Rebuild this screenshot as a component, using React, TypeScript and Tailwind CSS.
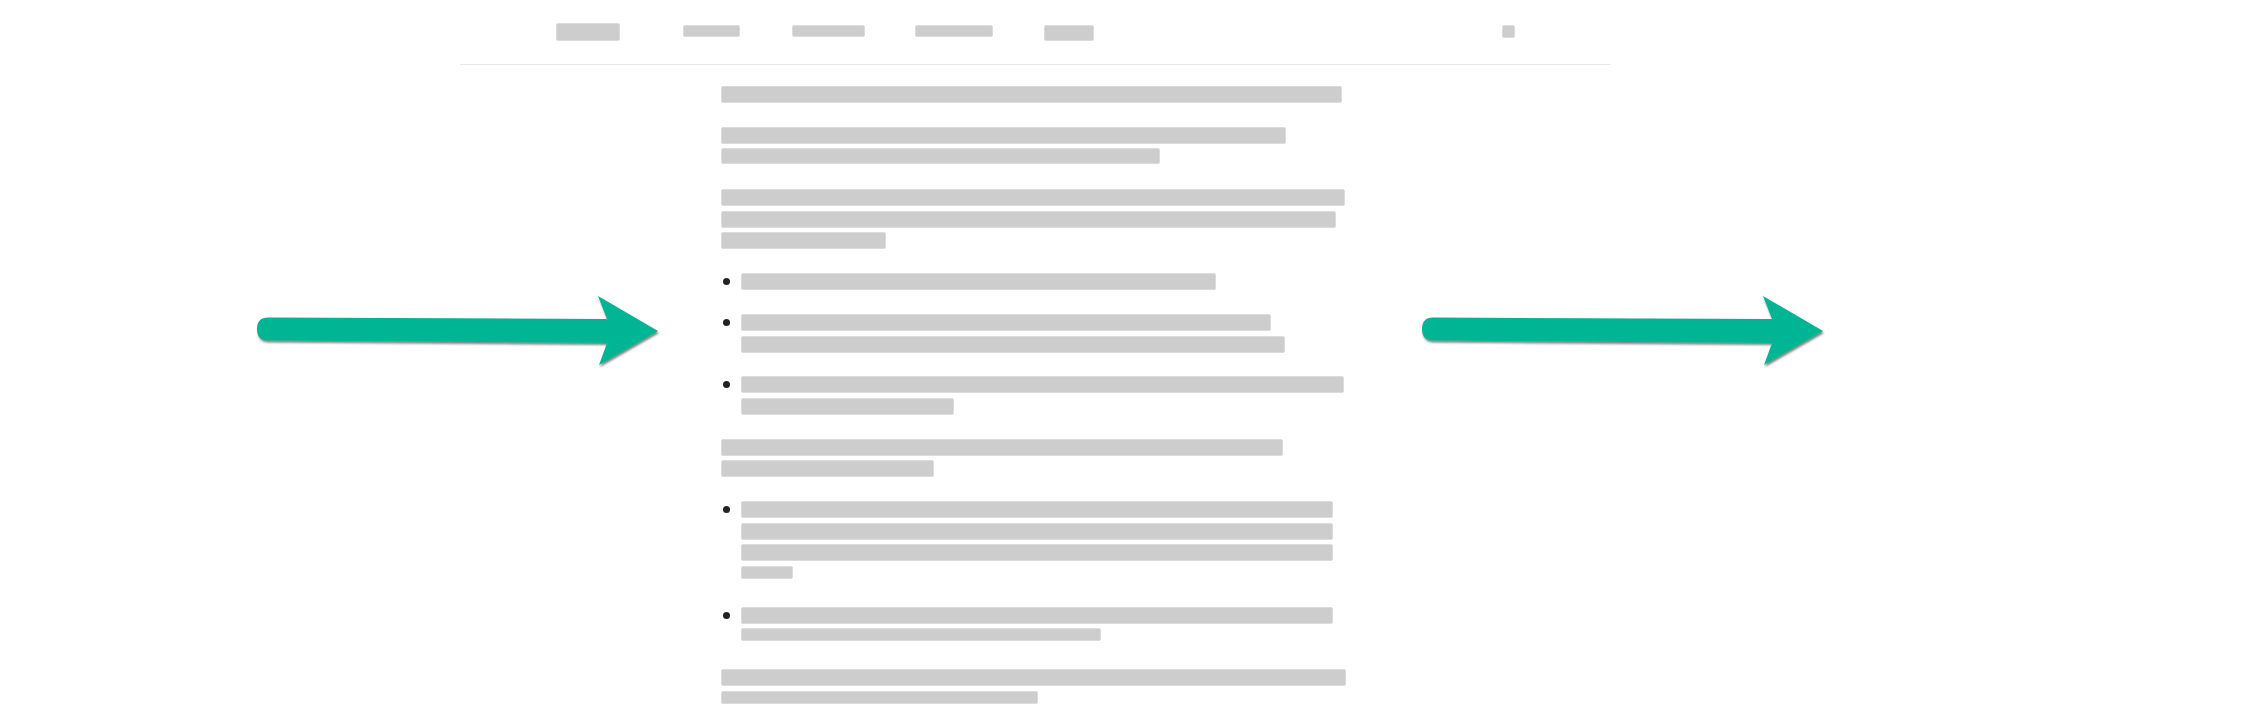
import React from 'react';

type Line = { w: number; h?: number };
type Block = { kind: 'p' | 'li'; lines: Line[] };

const navItems = [
  { w: 64, h: 18, ml: 0, mt: 0 },
  { w: 57, h: 12, ml: 63, mt: 2 },
  { w: 73, h: 12, ml: 52, mt: 2 },
  { w: 78, h: 12, ml: 50, mt: 2 },
  { w: 50, h: 16, ml: 51, mt: 2 },
];

const blocks: Block[] = [
  { kind: 'p', lines: [{ w: 621 }] },
  { kind: 'p', lines: [{ w: 565 }, { w: 439, h: 16 }] },
  { kind: 'p', lines: [{ w: 624 }, { w: 615 }, { w: 165 }] },
  { kind: 'li', lines: [{ w: 475 }] },
  { kind: 'li', lines: [{ w: 530 }, { w: 544 }] },
  { kind: 'li', lines: [{ w: 603 }, { w: 213 }] },
  { kind: 'p', lines: [{ w: 562 }, { w: 213 }] },
  { kind: 'li', lines: [{ w: 592 }, { w: 592 }, { w: 592 }, { w: 52, h: 13 }] },
  { kind: 'li', lines: [{ w: 592 }, { w: 360, h: 13 }] },
  { kind: 'p', lines: [{ w: 625 }, { w: 317, h: 13 }] },
];

// grey redaction bar standing in for a line of text
const Bar = ({ w, h = 17 }: Line) => (
  <div
    className="bg-[#cdcdcd] border border-[#dcdcdc] rounded-[2px]"
    style={{ width: w, height: h }}
  />
);

const Arrow = ({ left }: { left: string }) => (
  <svg
    className={`absolute top-[294px] ${left}`}
    width="404"
    height="76"
    viewBox="0 0 404 76"
  >
    <defs>
      <filter id={`shadow-${left}`} x="-5%" y="-20%" width="110%" height="150%">
        <feDropShadow dx="1" dy="2" stdDeviation="1" floodColor="#4a4a4a" floodOpacity="0.7" />
      </filter>
    </defs>
    <path
      d="M 12 23.5 L 351 25 L 342 2 L 402 37 L 343 71 L 351 49 L 12 46.5 Q 1 46.5 1 35 Q 1 23.5 12 23.5 Z"
      fill="#02b593"
      filter={`url(#shadow-${left})`}
    />
  </svg>
);

const App: React.FC = () => {
  return (
    <div className="relative h-[705px] w-full overflow-hidden bg-white">
      {/* Header */}
      <header className="ml-[460px] w-[1151px] h-[65px] border-b border-[#e8e8ef] px-[96px] pt-[23px] flex justify-between items-start">
        <nav className="flex items-start">
          {navItems.map((item, i) => (
            <div key={i} style={{ marginLeft: item.ml, marginTop: item.mt }}>
              <Bar w={item.w} h={item.h} />
            </div>
          ))}
        </nav>
        <div className="mt-[2px]">
          <Bar w={13} h={13} />
        </div>
      </header>

      {/* Article body */}
      <main className="ml-[720px] w-[630px] pt-[21px] flex flex-col gap-[19px]">
        {blocks.map((block, i) =>
          block.kind === 'p' ? (
            <div key={i} className="flex flex-col">
              {block.lines.map((line, j) => (
                <div key={j} className="h-[21.7px] pl-px">
                  <Bar w={line.w} h={line.h} />
                </div>
              ))}
            </div>
          ) : (
            <div key={i} className="relative flex flex-col pl-[21px]">
              <span className="absolute left-[3px] top-[5px] w-[7px] h-[7px] rounded-full bg-[#222]" />
              {block.lines.map((line, j) => (
                <div key={j} className="h-[21.7px]">
                  <Bar w={line.w} h={line.h} />
                </div>
              ))}
            </div>
          )
        )}
      </main>

      <Arrow left="left-[256px]" />
      <Arrow left="left-[1421px]" />
    </div>
  );
};

export default App;
